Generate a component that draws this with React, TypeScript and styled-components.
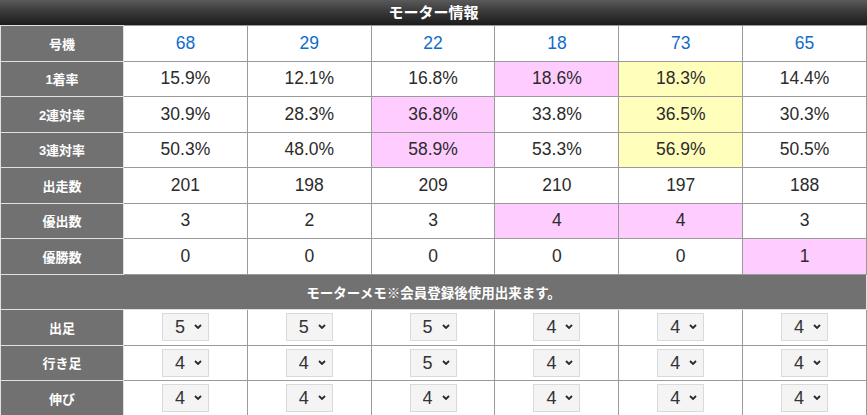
import styled, { createGlobalStyle, css } from 'styled-components'

type Mark = 'pink' | 'yellow' | undefined

const motors = ['68', '29', '22', '18', '73', '65']

const statRows: { label: string; values: string[]; marks: Mark[] }[] = [
  {
    label: '1着率',
    values: ['15.9%', '12.1%', '16.8%', '18.6%', '18.3%', '14.4%'],
    marks: [undefined, undefined, undefined, 'pink', 'yellow', undefined],
  },
  {
    label: '2連対率',
    values: ['30.9%', '28.3%', '36.8%', '33.8%', '36.5%', '30.3%'],
    marks: [undefined, undefined, 'pink', undefined, 'yellow', undefined],
  },
  {
    label: '3連対率',
    values: ['50.3%', '48.0%', '58.9%', '53.3%', '56.9%', '50.5%'],
    marks: [undefined, undefined, 'pink', undefined, 'yellow', undefined],
  },
  {
    label: '出走数',
    values: ['201', '198', '209', '210', '197', '188'],
    marks: [],
  },
  {
    label: '優出数',
    values: ['3', '2', '3', '4', '4', '3'],
    marks: [undefined, undefined, undefined, 'pink', 'pink', undefined],
  },
  {
    label: '優勝数',
    values: ['0', '0', '0', '0', '0', '1'],
    marks: [undefined, undefined, undefined, undefined, undefined, 'pink'],
  },
]

const memoRows = [
  { label: '出足', values: [5, 5, 5, 4, 4, 4] },
  { label: '行き足', values: [4, 4, 5, 4, 4, 4] },
  { label: '伸び', values: [4, 4, 4, 4, 4, 4] },
]

export default function App() {
  return (
    <>
      <GlobalStyle />
      <Panel>
        <Title>モーター情報</Title>
        <Table>
          <tbody>
            <tr>
              <Label>号機</Label>
              {motors.map((m) => (
                <Cell key={m}>
                  <MotorNo>{m}</MotorNo>
                </Cell>
              ))}
            </tr>
            {statRows.map((row) => (
              <tr key={row.label}>
                <Label>{row.label}</Label>
                {row.values.map((v, i) => (
                  <Cell key={i} $mark={row.marks[i]}>
                    {v}
                  </Cell>
                ))}
              </tr>
            ))}
            <tr>
              <MemoHead colSpan={7}>モーターメモ※会員登録後使用出来ます。</MemoHead>
            </tr>
            {memoRows.map((row) => (
              <tr key={row.label}>
                <Label>{row.label}</Label>
                {row.values.map((v, i) => (
                  <Cell key={i}>
                    <SelectWrap>
                      <Select defaultValue={String(v)} disabled>
                        {[1, 2, 3, 4, 5].map((n) => (
                          <option key={n} value={n}>
                            {n}
                          </option>
                        ))}
                      </Select>
                      <Chevron viewBox='0 0 8 5' aria-hidden='true'>
                        <path d='M1 1 L4 4 L7 1' />
                      </Chevron>
                    </SelectWrap>
                  </Cell>
                ))}
              </tr>
            ))}
          </tbody>
        </Table>
      </Panel>
    </>
  )
}

const GlobalStyle = createGlobalStyle`
  html, body {
    margin: 0;
    padding: 0;
    background: #fff;
  }
  body {
    font-family: "Liberation Sans", Arial, "Noto Sans CJK JP", sans-serif;
    color: #333;
  }
`

const Panel = styled.section`
  width: 867px;
`

const Title = styled.h2`
  margin: 0;
  height: 25px;
  line-height: 25px;
  text-align: center;
  font-family: "Liberation Sans", "Noto Sans CJK JP", sans-serif;
  font-size: 15px;
  font-weight: 700;
  color: #fff;
  background: linear-gradient(to bottom, #5a5a5a 0%, #3a3a3a 45%, #1c1c1c 100%);
`

const Table = styled.table`
  width: 100%;
  border-collapse: collapse;
  table-layout: fixed;
  border-top: 1px solid #e6e6e6;
`

const labelText = css`
  padding: 0;
  background: #717171;
  color: #fff;
  font-family: "Liberation Sans", "Noto Sans CJK JP", sans-serif;
  font-size: 13px;
  font-weight: 700;
  text-align: center;
  border: 1px solid #e0e0e0;
`

const Label = styled.th`
  ${labelText};
  width: 122px;
  height: 34.5px;
`

const Cell = styled.td<{ $mark?: Mark }>`
  height: 34.5px;
  padding: 0;
  text-align: center;
  font-size: 17.5px;
  color: #2b2b2b;
  border: 1px solid #9a9a9a;
  background: #fff;

  ${(p) =>
    p.$mark === 'pink' &&
    css`
      background: #ffccff;
    `}
  ${(p) =>
    p.$mark === 'yellow' &&
    css`
      background: #ffffbb;
    `}
`

const MotorNo = styled.span`
  color: #0f6dc9;
`

const MemoHead = styled.th`
  ${labelText};
  height: 34.5px;
  font-size: 13.5px;
`

const SelectWrap = styled.span`
  position: relative;
  display: inline-block;
  vertical-align: middle;
`

const Select = styled.select`
  appearance: none;
  -webkit-appearance: none;
  display: block;
  width: 47px;
  height: 28px;
  margin: 0;
  padding: 0 0 0 12px;
  background: #f4f4f4;
  border: 1px solid #dadada;
  border-radius: 0;
  font-family: "Liberation Sans", Arial, sans-serif;
  font-size: 18px;
  color: #333;
  opacity: 1;
  text-align: left;

  &:disabled {
    color: #333;
  }
`

const Chevron = styled.svg`
  position: absolute;
  right: 7px;
  top: 11px;
  width: 8px;
  height: 5px;
  fill: none;
  stroke: #2a2a2a;
  stroke-width: 1.8;
  pointer-events: none;
`
